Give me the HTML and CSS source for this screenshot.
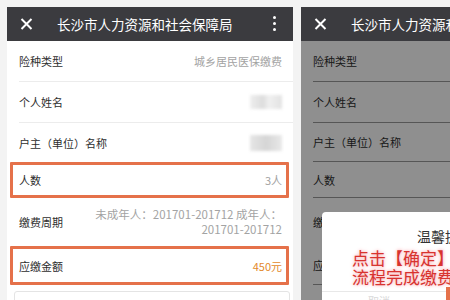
FILE: index.html
```html
<!DOCTYPE html>
<html lang="zh">
<head>
<meta charset="utf-8">
<link rel="stylesheet" href="styles.css">
</head>
<body>
<div class="stage">
  <div class="phone">
    <div class="bar">
      <svg class="close" width="13" height="12" viewBox="0 0 13 12"><path d="M1.5 1 L11.5 11 M11.5 1 L1.5 11" stroke="#fff" stroke-width="2" fill="none"/></svg>
      <span class="title">长沙市人力资源和社会保障局</span>
      <span class="more"><i></i><i></i><i></i></span>
    </div>
    <div class="list">
      <div class="row"><span class="lab">险种类型</span><span class="val">城乡居民医保缴费</span></div>
      <div class="row"><span class="lab">个人姓名</span><span class="blur"></span></div>
      <div class="row r3"><span class="lab">户主（单位）名称</span><span class="blur b2"></span></div>
      <div class="row hl h1"><span class="lab">人数</span><span class="val">3人</span></div>
      <div class="row period"><span class="lab">缴费周期</span><span class="val multi">未成年人：201701-201712 成年人：<br>201701-201712</span></div>
      <div class="row hl h2"><span class="lab">应缴金额</span><span class="val money">450元</span></div>
      <div class="card"></div>
    </div>
  </div>
  <div class="phone right">
    <div class="bar">
      <svg class="close" width="13" height="12" viewBox="0 0 13 12"><path d="M1.5 1 L11.5 11 M11.5 1 L1.5 11" stroke="#fff" stroke-width="2" fill="none"/></svg>
      <span class="title">长沙市人力资源和社会保障局</span>
    </div>
    <div class="list dim">
      <div class="row"><span class="lab">险种类型</span></div>
      <div class="row"><span class="lab">个人姓名</span></div>
      <div class="row r3"><span class="lab">户主（单位）名称</span></div>
      <div class="row plain"><span class="lab">人数</span></div>
      <div class="row period"><span class="lab">缴费周期</span></div>
      <div class="row plain2"><span class="lab">应缴金额</span></div>
      <div class="dialog">
        <div class="dtitle">温馨提示</div>
        <div class="dmsg">点击【确定】进入支付<br>流程完成缴费！</div>
        <div class="dbtns"><span class="cancel">取消</span><span class="ok"></span></div>
      </div>
    </div>
  </div>
</div>
</body>
</html>
```

FILE: styles.css
```css
* { box-sizing: border-box; margin: 0; padding: 0; }
html, body { width: 450px; height: 300px; overflow: hidden; background: #f3f3f3; }
body { font-family: "Noto Sans CJK SC", "Noto Sans", sans-serif; }
.stage { display: flex; gap: 8px; padding: 7px 0 0 7px; width: 800px; }
.phone { width: 286px; flex-shrink: 0; background: #fff; height: 300px; }
.bar { height: 34px; background: #3b3b3f; display: flex; align-items: center; padding-left: 13px; position: relative; }
.close { flex-shrink: 0; }
.title { color: #fff; font-size: 13.5px; margin-left: 24px; white-space: nowrap; }
.more { position: absolute; right: 17px; top: 9px; display: flex; flex-direction: column; gap: 3px; }
.more i { width: 3px; height: 3px; background: #fff; border-radius: 50%; display: block; }
.list { position: relative; }
.row { height: 41px; display: flex; align-items: center; justify-content: space-between; margin-left: 12px; padding-right: 11px; border-bottom: 1px solid #ececec; }
.lab { font-size: 11px; color: #2e2e2e; }
.val { font-size: 11px; color: #a3a3a3; text-align: right; }
.multi { line-height: 15px; font-size: 11.5px; }
.money { color: #e3892c; }
.blur { width: 32px; height: 14px; background: linear-gradient(90deg, #eee, #ddd 40%, #f0f0f0 60%, #e2e2e2); filter: blur(1.5px); }
.b2 { height: 16px; background: linear-gradient(90deg, #e6e6e6, #d5d5d5 50%, #e8e8e8); }
.r3 { height: 39px; border-bottom: none; }
.hl { margin: 0 4px 0 3px; border: 3px solid #e5714a; border-radius: 1px; padding: 0 4px 0 6px; }
.h1 { height: 36px; }
.period { height: 48px; border-bottom: none; }
.h2 { height: 39px; }
.card { margin: 6px 3px 0 7px; height: 20px; border: 1px solid #e4e4e4; border-radius: 3px; }
.dim .row { border-bottom-color: #9a9a9a; }
.right .plain { height: 36px; border-bottom: 1px solid #9a9a9a; }
.right .r3 { border-bottom: 1px solid #9a9a9a; }
.right .plain2 { height: 39px; }
.dim { background: #fff; height: 266px; }
.dim::after { content: ""; position: absolute; inset: 0; background: rgba(0,0,0,0.44); }
.dialog { position: absolute; left: 21px; top: 171px; width: 244px; height: 120px; background: #fff; border-radius: 4px; z-index: 2; }
.dtitle { text-align: center; font-size: 14px; color: #333; margin-top: 15px; line-height: 18px; padding-left: 2px; }
.dmsg { margin: 3px 0 0 30px; font-size: 17px; line-height: 19px; color: #d8332f; white-space: nowrap; text-shadow: 0 0 3px #f7b3b8, 0 0 5px #fbd0d4; }
.dbtns { position: absolute; left: 0; right: 0; top: 79px; height: 30px; border-top: 1px solid #e8e8e8; display: flex; }
.cancel { margin-left: 46px; font-size: 11px; color: #d9d9d9; margin-top: 1px; }
.ok { position: absolute; left: 124px; top: -5px; width: 10px; height: 20px; background: #e5714a; }
```
